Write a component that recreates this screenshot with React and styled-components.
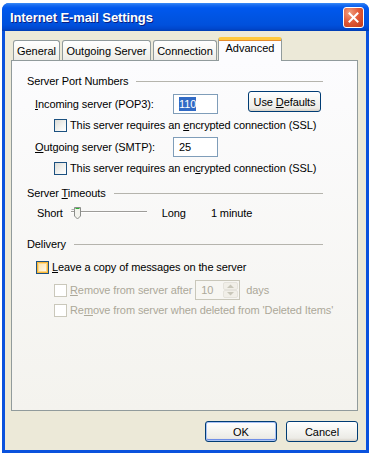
import React from "react";
import styled, { createGlobalStyle, css } from "styled-components";

const Global = createGlobalStyle`
  html, body { margin: 0; padding: 0; background: #ffffff; }
  body { font-family: "Liberation Sans", Arial, sans-serif; font-size: 11px; color: #000; }
  #root { width: 371px; height: 455px; overflow: hidden; }
`;

const Page = styled.div`
  width: 371px;
  height: 455px;
  padding: 3px 2px 2px 2px;
  box-sizing: border-box;
  background: #ffffff;
`;

const Window = styled.div`
  width: 367px;
  height: 450px;
  display: flex;
  flex-direction: column;
  border-radius: 7px 7px 0 0;
  background: #0a52dd;
  overflow: hidden;
`;

const TitleBar = styled.div`
  height: 28px;
  flex: none;
  display: flex;
  align-items: center;
  justify-content: space-between;
  padding: 0 5px 0 8px;
  background: linear-gradient(
    to bottom,
    #3a8cf7 0px,
    #1a6cf0 2px,
    #0058ee 5px,
    #0054e3 14px,
    #0050dc 22px,
    #0046cc 26px,
    #003cb0 28px
  );
`;

const Title = styled.div`
  color: #ffffff;
  font-family: "Liberation Sans", Arial, sans-serif;
  font-weight: bold;
  font-size: 13px;
  letter-spacing: -0.1px;
  text-shadow: 1px 1px 0 #0a1e80;
  padding-top: 1px;
`;

const CloseButton = styled.div`
  width: 19px;
  height: 19px;
  border: 1px solid #ffffff;
  border-radius: 3px;
  background: radial-gradient(circle at 30% 25%, #f0a080 0%, #e35b3a 45%, #c23a18 100%);
  display: flex;
  align-items: center;
  justify-content: center;
  margin-top: 1px;
`;

const Body = styled.div`
  flex: 1;
  display: flex;
  flex-direction: column;
  background: #ece9d8;
  margin: 0 3px 3px 3px;
  padding: 6px 8px 8px 6px;
`;

const TabStrip = styled.div`
  height: 24px;
  display: flex;
  align-items: flex-end;
  padding-left: 2px;
  margin-bottom: -1px;
  position: relative;
  z-index: 1;
`;

const Tab = styled.div`
  width: ${(p) => p.$w}px;
  height: 20px;
  margin-bottom: 1px;
  margin-right: ${(p) => p.$gap ?? 2}px;
  box-sizing: border-box;
  border: 1px solid #919b9c;
  border-bottom: none;
  border-radius: 3px 3px 0 0;
  background: linear-gradient(to bottom, #ffffff 0%, #f7f7f3 50%, #ecebe6 100%);
  display: flex;
  align-items: center;
  justify-content: center;
  padding-top: 1px;
  white-space: nowrap;
  ${(p) =>
    p.$active &&
    css`
      height: 24px;
      margin-bottom: 0;
      border-top: 3px solid #ffc83c;
      box-shadow: inset 0 1px 0 #e68b2c;
      background: #fcfcfe;
      align-items: flex-start;
      padding-top: 2px;
      border-radius: 3px 3px 0 0;
    `}
`;

const Panel = styled.div`
  height: 351px;
  box-sizing: border-box;
  border: 1px solid #919b9c;
  background: linear-gradient(to bottom, #fcfcfe 0%, #f4f3ee 100%);
  padding: 13px 34px 0 15px;
  display: flex;
  flex-direction: column;
  letter-spacing: -0.1px;
`;

const SectionHeader = styled.div`
  height: 14px;
  display: flex;
  align-items: center;
  gap: 8px;
  margin-top: ${(p) => p.$mt || 0}px;
`;

const Rule = styled.div`
  flex: 1;
  height: 1px;
  background: #b5b4ad;
`;

const Row = styled.div`
  height: ${(p) => p.$h || 14}px;
  display: flex;
  align-items: center;
  margin-top: ${(p) => p.$mt || 0}px;
  padding-left: ${(p) => p.$indent || 0}px;
  color: ${(p) => (p.$disabled ? "#aca899" : "#000")};
  white-space: pre;
`;

const FieldLabel = styled.span`
  width: 138px;
  flex: none;
`;

const TextBox = styled.div`
  width: 45px;
  height: 20px;
  box-sizing: border-box;
  border: 1px solid #7f9db9;
  background: #ffffff;
  display: flex;
  align-items: center;
  padding-left: 5px;
  color: #000;
`;

const Selected = styled.span`
  background: #316ac5;
  color: #ffffff;
  padding: 1px 0;
`;

const Button = styled.div`
  width: ${(p) => p.$w || 72}px;
  height: 21px;
  box-sizing: border-box;
  border: 1px solid #003c74;
  border-radius: 3px;
  background: linear-gradient(to bottom, #ffffff 0%, #f6f6f3 40%, #ecebe6 85%, #d6d0c5 100%);
  display: flex;
  align-items: center;
  justify-content: center;
  color: #000;
  white-space: pre;
  ${(p) =>
    p.$default &&
    css`
      box-shadow: inset 0 0 0 1px #a9c2f5, inset 0 -1px 0 1px #6f8ee6;
    `}
  ${(p) => p.$mt && css`margin-top: ${p.$mt}px;`}
  ${(p) => p.$mr && css`margin-right: ${p.$mr}px;`}
`;

const Spacer = styled.div`
  flex: 1;
`;

const Check = styled.div`
  width: 13px;
  height: 13px;
  flex: none;
  box-sizing: border-box;
  border: 1px solid ${(p) => (p.$disabled ? "#cac8bb" : "#1c5180")};
  background: ${(p) =>
    p.$disabled ? "#ffffff" : "linear-gradient(135deg, #dcdcd7 0%, #f4f4f1 60%, #ffffff 100%)"};
  margin-right: 3px;
  ${(p) =>
    p.$hover &&
    css`
      box-shadow: inset 0 0 0 1px #f8b636, inset 0 0 0 2px #fdd889;
      background: linear-gradient(135deg, #fbe2a8 0%, #fdf1d4 60%, #ffffff 100%);
    `}
`;

const U = styled.span`
  text-decoration: underline;
  text-underline-offset: 1px;
`;

const SliderBox = styled.div`
  width: 76px;
  height: 16px;
  margin-left: 8px;
  display: flex;
  align-items: center;
  flex: none;
`;

const Gap = styled.span`
  margin-left: ${(p) => p.$w}px;
`;

const Spinner = styled.div`
  width: 45px;
  height: 20px;
  box-sizing: border-box;
  border: 1px solid #c9c7ba;
  background: #f7f6f2;
  display: flex;
  align-items: stretch;
  margin: 0 6px 0 3px;
`;

const SpinText = styled.div`
  flex: 1;
  display: flex;
  align-items: center;
  padding-left: 5px;
  color: #aca899;
`;

const SpinButtons = styled.div`
  width: 15px;
  display: flex;
  flex-direction: column;
  padding: 1px 1px 1px 0;
`;

const SpinBtn = styled.div`
  flex: 1;
  border: 1px solid #e5e3dc;
  border-radius: 2px;
  background: #f1efe8;
  display: flex;
  align-items: center;
  justify-content: center;
`;

const ButtonBar = styled.div`
  display: flex;
  justify-content: flex-end;
  gap: 9px;
  margin-top: 10px;
`;

export default function App() {
  return (
    <>
      <Global />
      <Page>
        <Window>
          <TitleBar>
            <Title>Internet E-mail Settings</Title>
            <CloseButton>
              <svg width="11" height="11" viewBox="0 0 11 11">
                <path d="M1.5 1.5 L9.5 9.5 M9.5 1.5 L1.5 9.5" stroke="#fff" strokeWidth="2" strokeLinecap="square" />
              </svg>
            </CloseButton>
          </TitleBar>
          <Body>
            <TabStrip>
              <Tab $w={47}>General</Tab>
              <Tab $w={89}>Outgoing Server</Tab>
              <Tab $w={64} $gap={1}>Connection</Tab>
              <Tab $w={64} $active>Advanced</Tab>
            </TabStrip>
            <Panel>
              <SectionHeader>
                <span>Server Port Numbers</span>
                <Rule />
              </SectionHeader>
              <Row $h={20} $mt={6} $indent={8}>
                <FieldLabel>
                  <U>I</U>ncoming server (POP3):
                </FieldLabel>
                <TextBox>
                  <Selected>110</Selected>
                </TextBox>
                <Spacer />
                <Button $w={73} $mt={-5} $mr={2}>
                  <span>
                    Use <U>D</U>efaults
                  </span>
                </Button>
              </Row>
              <Row $mt={4} $indent={27}>
                <Check />
                <span>
                  This server requires an <U>e</U>ncrypted connection (SSL)
                </span>
              </Row>
              <Row $h={20} $mt={5} $indent={8}>
                <FieldLabel>
                  <U>O</U>utgoing server (SMTP):
                </FieldLabel>
                <TextBox>25</TextBox>
              </Row>
              <Row $mt={4} $indent={27}>
                <Check />
                <span>
                  This server requires an en<U>c</U>rypted connection (SSL)
                </span>
              </Row>
              <SectionHeader $mt={11}>
                <span>
                  Server <U>T</U>imeouts
                </span>
                <Rule />
              </SectionHeader>
              <Row $h={16} $mt={5} $indent={10}>
                <span>Short</span>
                <SliderBox>
                  <svg width="76" height="16" viewBox="0 0 76 16">
                    <line x1="0" y1="6.5" x2="76" y2="6.5" stroke="#9d9c99" />
                    <line x1="0" y1="7.5" x2="76" y2="7.5" stroke="#ffffff" />
                    <path d="M3.5 2.5 H9.5 V11 L6.5 14 L3.5 11 Z" fill="#f3f3ee" stroke="#8b8d8a" />
                    <line x1="4.5" y1="3.5" x2="8.5" y2="3.5" stroke="#2bb032" />
                    <line x1="0.5" y1="4.5" x2="3.5" y2="4.5" stroke="#aeb0ad" />
                  </svg>
                </SliderBox>
                <Gap $w={15}>Long</Gap>
                <Gap $w={25}>1 minute</Gap>
              </Row>
              <SectionHeader $mt={16}>
                <span>Delivery</span>
                <Rule />
              </SectionHeader>
              <Row $mt={9} $indent={9}>
                <Check $hover />
                <span>
                  <U>L</U>eave a copy of messages on the server
                </span>
              </Row>
              <Row $h={20} $mt={6} $indent={27} $disabled>
                <Check $disabled />
                <span>
                  <U>R</U>emove from server after
                </span>
                <Spinner>
                  <SpinText>10</SpinText>
                  <SpinButtons>
                    <SpinBtn>
                      <svg width="7" height="4" viewBox="0 0 7 4">
                        <path d="M0 4 L3.5 0.5 L7 4 Z" fill="#c9c7ba" />
                      </svg>
                    </SpinBtn>
                    <SpinBtn>
                      <svg width="7" height="4" viewBox="0 0 7 4">
                        <path d="M0 0 L3.5 3.5 L7 0 Z" fill="#c9c7ba" />
                      </svg>
                    </SpinBtn>
                  </SpinButtons>
                </Spinner>
                <span>days</span>
              </Row>
              <Row $mt={3} $indent={27} $disabled>
                <Check $disabled />
                <span>
                  Re<U>m</U>ove from server when deleted from 'Deleted Items'
                </span>
              </Row>
            </Panel>
            <ButtonBar>
              <Button $default>OK</Button>
              <Button>Cancel</Button>
            </ButtonBar>
          </Body>
        </Window>
      </Page>
    </>
  );
}
